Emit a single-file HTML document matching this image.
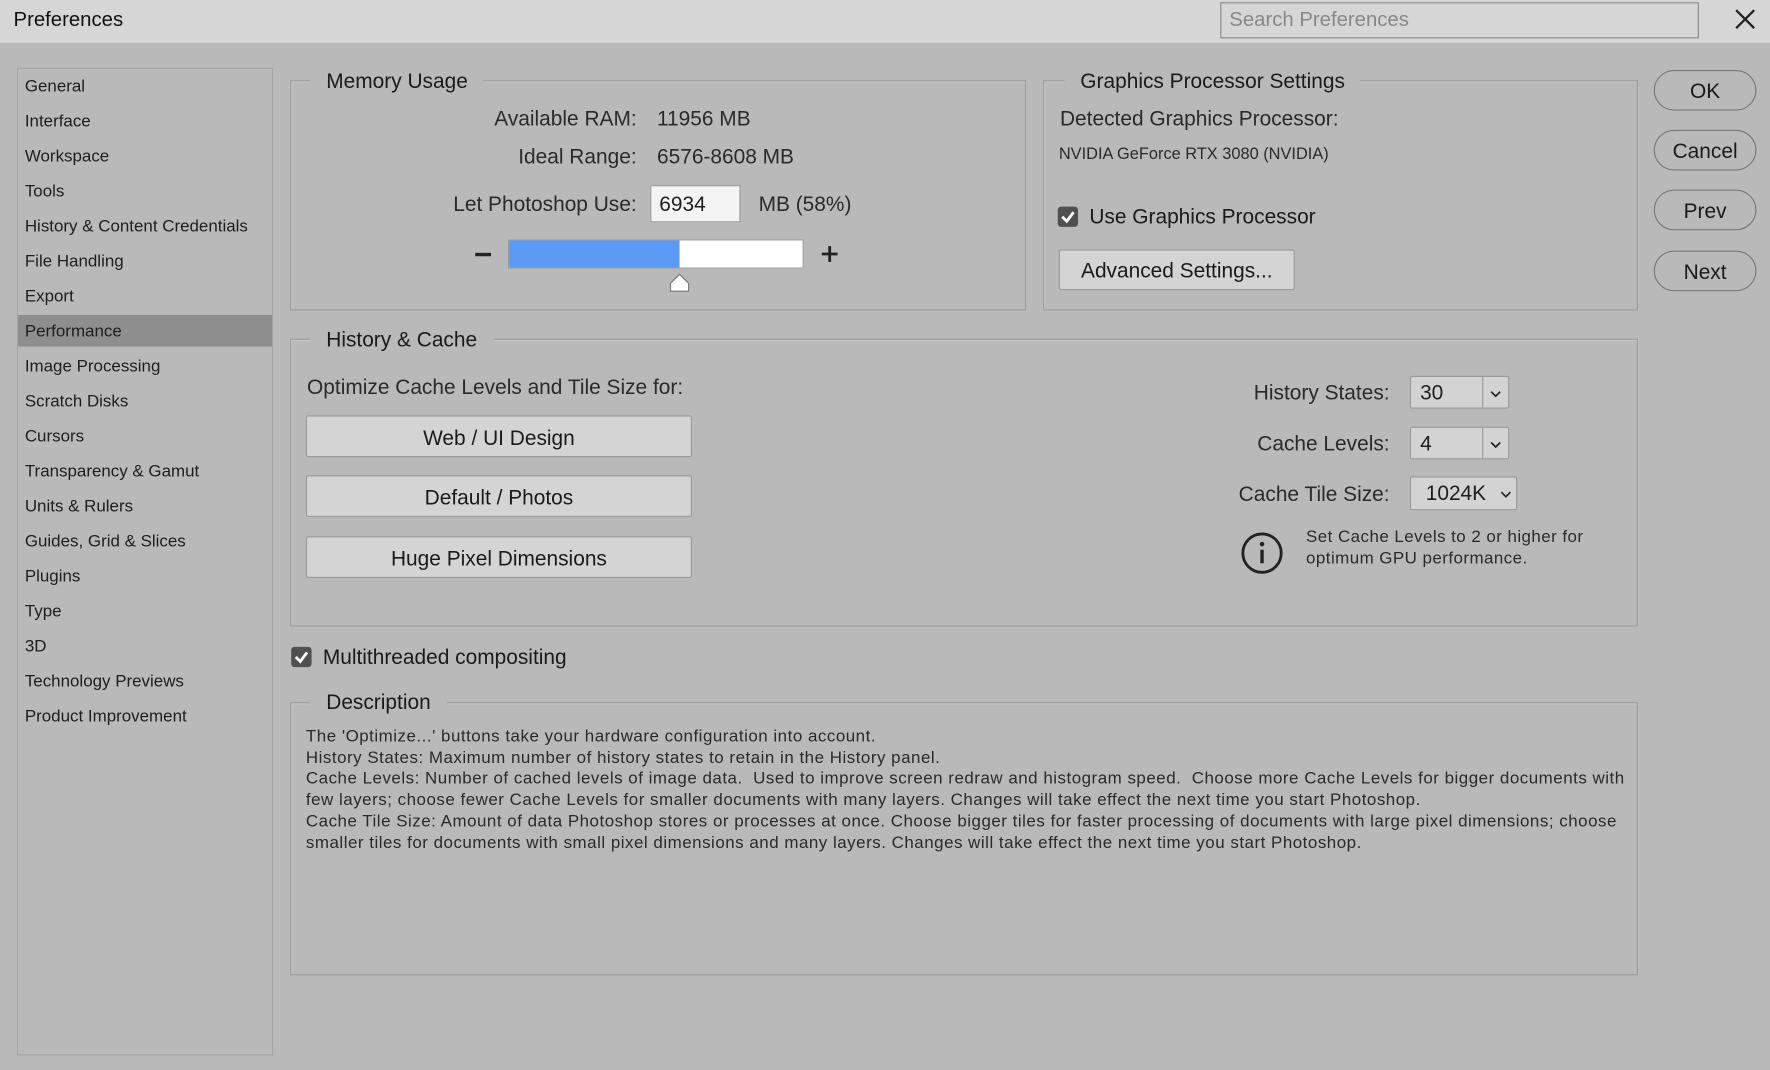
<!DOCTYPE html>
<html><head><meta charset="utf-8"><style>
html,body{margin:0;padding:0;width:1770px;height:1070px;overflow:hidden;background:#b9b9b9;}
#w{position:absolute;left:0;top:0;width:1568px;height:948px;transform:scale(1.12883);transform-origin:0 0;background:#b9b9b9;font-family:"Liberation Sans",sans-serif;color:#1e1e1e;}
.a{position:absolute;white-space:nowrap;}
.box{position:absolute;border:1px solid #9c9c9c;box-shadow:1px 1px 0 #c8c8c8 inset;}
.lg{position:absolute;background:#b9b9b9;padding:0 14px 0 14px;font-size:18.5px;line-height:22px;color:#1a1a1a;}
.side div{position:absolute;left:6px;font-size:15px;line-height:18px;color:#1e1e1e;}
.btn{position:absolute;background:#d4d4d4;border:1px solid #999;border-radius:2px;font-size:18.5px;text-align:center;color:#1a1a1a;box-sizing:border-box;}
.pill{position:absolute;left:1465px;width:91px;height:36px;border:1px solid #777;border-radius:18px;box-sizing:border-box;font-size:18.5px;text-align:center;line-height:36px;color:#1a1a1a;}
.r{position:absolute;text-align:right;font-size:18.5px;white-space:nowrap;color:#2a2a2a;}
.sel{position:absolute;background:#d3d3d3;border:1px solid #999;border-radius:2px;box-sizing:border-box;font-size:18.5px;line-height:28px;padding-left:8px;}
.sel i{position:absolute;right:0;top:0;bottom:0;width:22px;border-left:1px solid #999;}
.cb{position:absolute;width:18px;height:18px;background:#505050;border-radius:3px;}
.desc{position:absolute;left:271px;top:644px;font-size:15px;line-height:18.7px;letter-spacing:0.45px;color:#2a2a2a;white-space:pre;}
</style></head><body><div id="w">
<div class="a" style="left:0;top:0;width:1568px;height:38px;background:#d6d6d6;"></div>
<div class="a" style="left:12px;top:7px;font-size:18px;color:#111;">Preferences</div>
<div class="a" style="left:1081px;top:2px;width:424px;height:32px;border:1px solid #8a8a8a;background:#d6d6d6;box-sizing:border-box;"></div>
<div class="a" style="left:1089px;top:7px;font-size:18px;color:#888;">Search Preferences</div>
<svg class="a" style="left:1536px;top:7px" width="20" height="20"><path d="M2 2L18 18M18 2L2 18" stroke="#222" stroke-width="2"/></svg>

<div class="a side" style="left:15px;top:60px;width:225px;height:873px;border:1px solid #a4a4a4;">
<div style="left:0;top:218px;width:225px;height:28px;background:#8e8e8e;"></div>
<div style="top:7px">General</div><div style="top:38px">Interface</div><div style="top:69px">Workspace</div><div style="top:100px">Tools</div><div style="top:131px">History &amp; Content Credentials</div><div style="top:162px">File Handling</div><div style="top:193px">Export</div><div style="top:224px">Performance</div><div style="top:255px">Image Processing</div><div style="top:286px">Scratch Disks</div><div style="top:317px">Cursors</div><div style="top:348px">Transparency &amp; Gamut</div><div style="top:379px">Units &amp; Rulers</div><div style="top:410px">Guides, Grid &amp; Slices</div><div style="top:441px">Plugins</div><div style="top:472px">Type</div><div style="top:503px">3D</div><div style="top:534px">Technology Previews</div><div style="top:565px">Product Improvement</div>
</div>

<div class="box" style="left:257px;top:71px;width:650px;height:202px;"></div>
<div class="lg" style="left:275px;top:61px;">Memory Usage</div>
<div class="r" style="right:1004px;top:94px;">Available RAM:</div>
<div class="r" style="right:1004px;top:128px;">Ideal Range:</div>
<div class="r" style="right:1004px;top:170px;">Let Photoshop Use:</div>
<div class="a" style="left:582px;top:94px;font-size:18.5px;color:#2a2a2a;">11956 MB</div>
<div class="a" style="left:582px;top:128px;font-size:18.5px;color:#2a2a2a;">6576-8608 MB</div>
<div class="a" style="left:576px;top:164px;width:80px;height:33px;background:#f4f4f4;border:1px solid #999;box-sizing:border-box;font-size:18.5px;line-height:32px;padding-left:7px;">6934</div>
<div class="a" style="left:672px;top:170px;font-size:18.5px;color:#2a2a2a;">MB (58%)</div>
<div class="a" style="left:421px;top:224px;width:14px;height:3px;background:#222;"></div>
<div class="a" style="left:450px;top:212px;width:262px;height:26px;background:#fff;border:1px solid #999;box-sizing:border-box;"></div>
<div class="a" style="left:451px;top:213px;width:151px;height:24px;background:#5b9af5;"></div>
<svg class="a" style="left:727px;top:217px" width="16" height="16"><path d="M8 1V15M1 8H15" stroke="#222" stroke-width="2.5"/></svg>
<svg class="a" style="left:593px;top:242px" width="18" height="17"><path d="M1 16V9L9 1L17 9V16Z" fill="#fff" stroke="#777"/></svg>

<div class="box" style="left:924px;top:71px;width:525px;height:202px;"></div>
<div class="lg" style="left:943px;top:61px;">Graphics Processor Settings</div>
<div class="a" style="left:939px;top:94px;font-size:18.5px;color:#2a2a2a;">Detected Graphics Processor:</div>
<div class="a" style="left:938px;top:129px;font-size:14.5px;color:#2a2a2a;">NVIDIA GeForce RTX 3080 (NVIDIA)</div>
<div class="cb" style="left:937px;top:183px;"></div>
<svg class="a" style="left:937px;top:183px" width="18" height="18"><path d="M4 9L8 13L14 5" stroke="#fff" stroke-width="2.5" fill="none"/></svg>
<div class="a" style="left:965px;top:181px;font-size:18.5px;color:#1a1a1a;">Use Graphics Processor</div>
<div class="btn" style="left:938px;top:221px;width:209px;height:36px;line-height:36px;">Advanced Settings...</div>

<div class="pill" style="top:62px;">OK</div>
<div class="pill" style="top:115px;">Cancel</div>
<div class="pill" style="top:168px;">Prev</div>
<div class="pill" style="top:222px;">Next</div>

<div class="box" style="left:257px;top:300px;width:1192px;height:253px;"></div>
<div class="lg" style="left:275px;top:290px;">History &amp; Cache</div>
<div class="a" style="left:272px;top:332px;font-size:18.5px;color:#2a2a2a;">Optimize Cache Levels and Tile Size for:</div>
<div class="btn" style="left:271px;top:368px;width:342px;height:37px;line-height:37px;">Web / UI Design</div>
<div class="btn" style="left:271px;top:421px;width:342px;height:37px;line-height:37px;">Default / Photos</div>
<div class="btn" style="left:271px;top:475px;width:342px;height:37px;line-height:37px;">Huge Pixel Dimensions</div>
<div class="r" style="right:337px;top:337px;">History States:</div>
<div class="r" style="right:337px;top:382px;">Cache Levels:</div>
<div class="r" style="right:337px;top:427px;">Cache Tile Size:</div>
<div class="sel" style="left:1249px;top:333px;width:88px;height:29px;">30<i><svg width="22" height="27"><path d="M7 13L11 17L15 13" stroke="#222" stroke-width="1.5" fill="none"/></svg></i></div>
<div class="sel" style="left:1249px;top:378px;width:88px;height:29px;">4<i><svg width="22" height="27"><path d="M7 13L11 17L15 13" stroke="#222" stroke-width="1.5" fill="none"/></svg></i></div>
<div class="sel" style="left:1249px;top:422px;width:95px;height:30px;padding-left:13px;">1024K<svg style="position:absolute;left:78px;top:10px" width="12" height="10"><path d="M2 3L6 7L10 3" stroke="#222" stroke-width="1.5" fill="none"/></svg></div>
<svg class="a" style="left:1099px;top:471px" width="38" height="38"><circle cx="19" cy="19" r="17" fill="none" stroke="#222" stroke-width="2.5"/><circle cx="19" cy="11" r="2" fill="#222"/><path d="M19 16V28" stroke="#222" stroke-width="3"/></svg>
<div class="a" style="left:1157px;top:466px;font-size:15px;line-height:19px;letter-spacing:0.4px;color:#2a2a2a;">Set Cache Levels to 2 or higher for<br>optimum GPU performance.</div>

<div class="cb" style="left:258px;top:573px;"></div>
<svg class="a" style="left:258px;top:573px" width="18" height="18"><path d="M4 9L8 13L14 5" stroke="#fff" stroke-width="2.5" fill="none"/></svg>
<div class="a" style="left:286px;top:571px;font-size:18.5px;color:#1a1a1a;">Multithreaded compositing</div>

<div class="box" style="left:257px;top:622px;width:1192px;height:240px;"></div>
<div class="lg" style="left:275px;top:611px;">Description</div>
<div class="desc">The 'Optimize...' buttons take your hardware configuration into account.
History States: Maximum number of history states to retain in the History panel.
Cache Levels: Number of cached levels of image data.  Used to improve screen redraw and histogram speed.  Choose more Cache Levels for bigger documents with
few layers; choose fewer Cache Levels for smaller documents with many layers. Changes will take effect the next time you start Photoshop.
Cache Tile Size: Amount of data Photoshop stores or processes at once. Choose bigger tiles for faster processing of documents with large pixel dimensions; choose
smaller tiles for documents with small pixel dimensions and many layers. Changes will take effect the next time you start Photoshop.</div>
</div></body></html>
